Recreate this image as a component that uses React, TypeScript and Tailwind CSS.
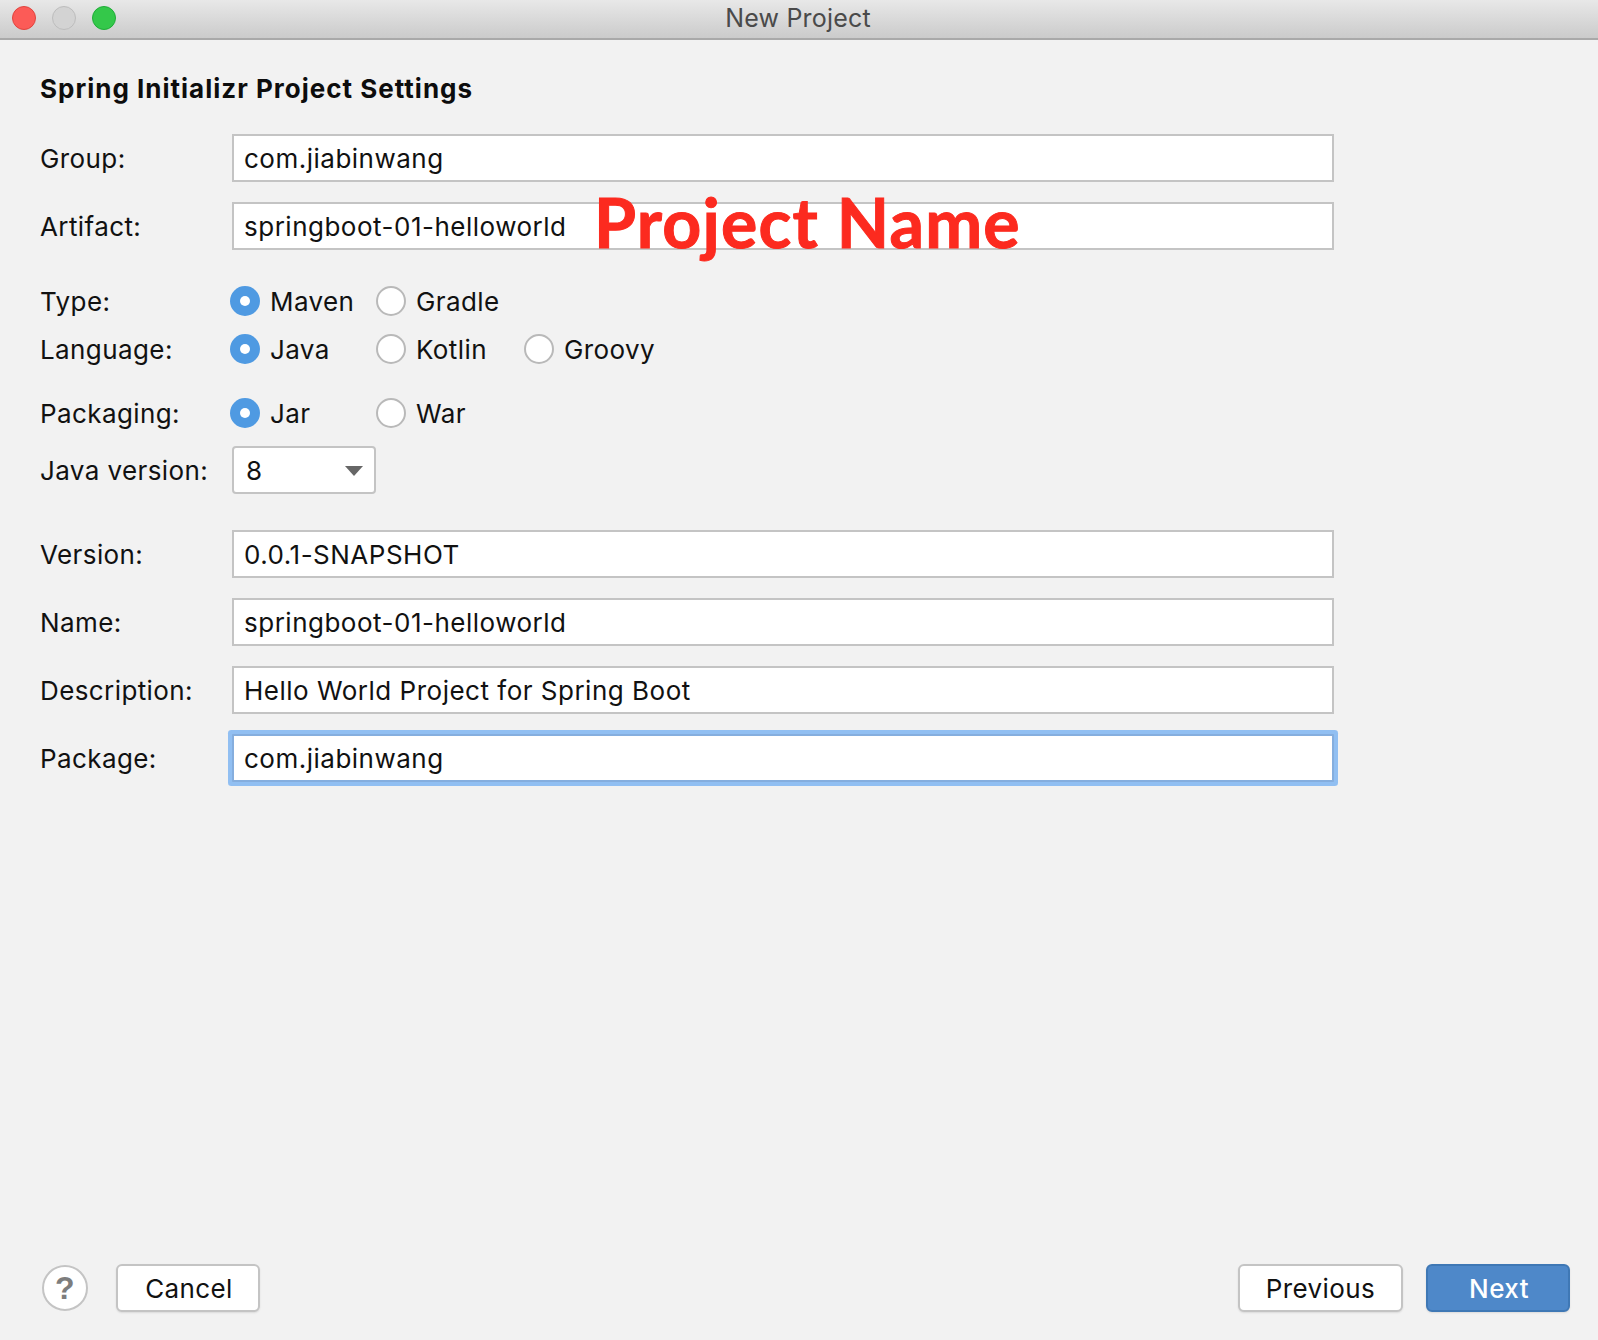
import type { ReactNode } from 'react';

function FormRow({ label, className = '', children }: { label: string; className?: string; children: ReactNode }) {
  return (
    <div className={`flex items-center ${className}`}>
      <span className="w-[192px] shrink-0">{label}</span>
      {children}
    </div>
  );
}

function TextField({ value, focused = false }: { value: string; focused?: boolean }) {
  return (
    <div
      className={`flex h-[48px] w-[1102px] items-center border-2 bg-white pl-[10px] tracking-[0.5px] ${
        focused
          ? 'rounded-[1px] border-[#85aede] shadow-[0_0_0_4px_#91bff2]'
          : 'border-[#c4c4c4]'
      }`}
    >
      {value}
    </div>
  );
}

function Radio({ label, checked = false, width }: { label: string; checked?: boolean; width: string }) {
  return (
    <div className={`flex items-center ${width}`}>
      {checked ? (
        <span className="flex h-[30px] w-[30px] shrink-0 items-center justify-center rounded-full bg-[#4f9ae2]">
          <span className="h-[10px] w-[10px] rounded-full bg-white" />
        </span>
      ) : (
        <span className="h-[30px] w-[30px] shrink-0 rounded-full border-2 border-[#b9b9b9] bg-white" />
      )}
      <span className="ml-[10px]">{label}</span>
    </div>
  );
}

export default function App() {
  return (
    <div className="relative flex h-[1340px] w-[1598px] flex-col overflow-hidden bg-[#f2f2f2] font-['Inter',sans-serif] text-[26px] tracking-[0.4px] text-[#111]">
      {/* title bar */}
      <div className="relative flex h-[40px] shrink-0 items-center justify-center border-b-2 border-[#a9a9a9] bg-gradient-to-b from-[#e8e8e8] to-[#cbcbcb]">
        <div className="absolute left-[12px] top-[6px] flex gap-[16px]">
          <span className="h-[24px] w-[24px] rounded-full border border-[#e0443e] bg-[#fc5b57]" />
          <span className="h-[24px] w-[24px] rounded-full border border-[#bdbdbd] bg-[#d3d3d3]" />
          <span className="h-[24px] w-[24px] rounded-full border border-[#1fad38] bg-[#34c84a]" />
        </div>
        <span className="-ml-[2px] text-[25px] tracking-[0.2px] text-[#4a4a4a]">New Project</span>
      </div>

      {/* form */}
      <div className="pl-[40px]">
        <h1 className="mt-[31px] text-[26px] leading-[36px] font-bold tracking-[1px] text-[#0d0d0d]">Spring Initializr Project Settings</h1>

        <FormRow label="Group:" className="mt-[27px]">
          <TextField value="com.jiabinwang" />
        </FormRow>
        <FormRow label="Artifact:" className="relative mt-[20px]">
          <TextField value="springboot-01-helloworld" />
          <span className="absolute left-[554px] top-[-20px] font-['Lato',sans-serif] text-[68px] leading-[80px] font-bold tracking-[1.2px] whitespace-nowrap text-[#fc2a1f] [-webkit-text-stroke:1px_#fc2a1f]">
            Project Name
          </span>
        </FormRow>

        <FormRow label="Type:" className="mt-[36px] h-[30px]">
          <div className="-ml-[2px] flex">
            <Radio label="Maven" checked width="w-[146px]" />
            <Radio label="Gradle" width="w-[148px]" />
          </div>
        </FormRow>
        <FormRow label="Language:" className="mt-[18px] h-[30px]">
          <div className="-ml-[2px] flex">
            <Radio label="Java" checked width="w-[146px]" />
            <Radio label="Kotlin" width="w-[148px]" />
            <Radio label="Groovy" width="w-[148px]" />
          </div>
        </FormRow>
        <FormRow label="Packaging:" className="mt-[34px] h-[30px]">
          <div className="-ml-[2px] flex">
            <Radio label="Jar" checked width="w-[146px]" />
            <Radio label="War" width="w-[148px]" />
          </div>
        </FormRow>
        <FormRow label="Java version:" className="mt-[18px]">
          <div className="flex h-[48px] w-[144px] items-center justify-between rounded-[4px] border-2 border-[#c4c4c4] bg-white pr-[10px] pl-[12px]">
            <span>8</span>
            <svg width="20" height="12" viewBox="0 0 20 12" className="mt-[2px]">
              <path d="M1 1h18l-9 10z" fill="#666" />
            </svg>
          </div>
        </FormRow>

        <FormRow label="Version:" className="mt-[36px]">
          <TextField value="0.0.1-SNAPSHOT" />
        </FormRow>
        <FormRow label="Name:" className="mt-[20px]">
          <TextField value="springboot-01-helloworld" />
        </FormRow>
        <FormRow label="Description:" className="mt-[20px]">
          <TextField value="Hello World Project for Spring Boot" />
        </FormRow>
        <FormRow label="Package:" className="mt-[20px]">
          <TextField value="com.jiabinwang" focused />
        </FormRow>
      </div>

      {/* footer buttons */}
      <div className="mt-auto mb-[28px] flex items-center pr-[28px] pl-[42px]">
        <div className="flex h-[46px] w-[46px] items-center justify-center rounded-full border-2 border-[#c4c4c4] bg-white font-['Liberation_Sans',sans-serif] text-[32px] leading-none font-bold text-[#7d7d7d]">
          ?
        </div>
        <button className="ml-[28px] h-[48px] w-[144px] rounded-[6px] border-2 border-[#c4c4c4] bg-white pl-[2px] shadow-[0_1px_2px_rgba(0,0,0,0.1)]">
          Cancel
        </button>
        <button className="ml-auto h-[48px] w-[165px] rounded-[6px] border-2 border-[#c4c4c4] bg-white shadow-[0_1px_2px_rgba(0,0,0,0.1)]">
          Previous
        </button>
        <button className="ml-[23px] h-[48px] w-[144px] rounded-[6px] border-2 border-[#3f78b5] bg-[#4e88c9] pl-[2px] font-medium text-white shadow-[0_1px_2px_rgba(0,0,0,0.1)]">
          Next
        </button>
      </div>
    </div>
  );
}
